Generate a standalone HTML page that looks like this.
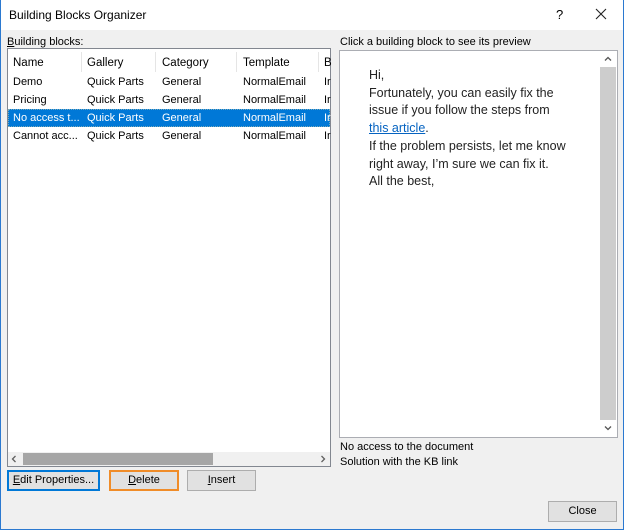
<!DOCTYPE html>
<html><head><style>
*{margin:0;padding:0;box-sizing:border-box}
body{width:624px;height:530px;overflow:hidden;background:#f0f0f0;font-family:"Liberation Sans",sans-serif;font-size:11px;color:#000;position:relative}
.a{position:absolute;white-space:nowrap}
#frame{position:absolute;left:0;top:0;width:624px;height:530px;border:1px solid #2b79d0;border-top:none;pointer-events:none}
.btn{position:absolute;height:21px;background:#e1e1e1;border:1px solid #adadad;text-align:center;line-height:19px;font-size:11px}
.row{position:absolute;left:1px;width:322px;height:18px;line-height:18px}
.row span,.hd span{position:absolute;top:0}
.pv{font-family:"Liberation Sans",sans-serif;font-size:12.5px;line-height:17.7px;color:#222}
</style></head><body>
<div class="a" style="left:0;top:0;width:624px;height:30px;background:#fff"></div>
<div class="a" style="left:9px;top:8px;font-size:12px">Building Blocks Organizer</div>
<div class="a" style="left:556px;top:7px;font-size:13px">?</div>
<svg class="a" style="left:595px;top:8px" width="12" height="12"><path d="M1 1L11 11M11 1L1 11" stroke="#222" stroke-width="1.1"/></svg>

<div class="a" style="left:7px;top:36px"><u>B</u>uilding blocks:</div>
<div class="a" style="left:7px;top:48px;width:324px;height:419px;background:#fff;border:1px solid #828790"></div>
<div class="a hd" style="left:8px;top:53px;width:322px;height:20px;line-height:20px;font-size:11.5px">
<span style="left:5px">Name</span><span style="left:79px">Gallery</span><span style="left:154px">Category</span><span style="left:235px">Template</span><span style="left:316px">B</span>
</div>
<div class="a" style="left:81px;top:52px;width:1px;height:20px;background:#e5e5e5"></div>
<div class="a" style="left:155px;top:52px;width:1px;height:20px;background:#e5e5e5"></div>
<div class="a" style="left:236px;top:52px;width:1px;height:20px;background:#e5e5e5"></div>
<div class="a" style="left:318px;top:52px;width:1px;height:20px;background:#e5e5e5"></div>
<div class="a" style="left:7px;top:73px;width:324px">
<div class="row" style="top:0"><span style="left:5px">Demo</span><span style="left:79px">Quick Parts</span><span style="left:154px">General</span><span style="left:235px">NormalEmail</span><span style="left:316px">Ir</span></div>
<div class="row" style="top:18px"><span style="left:5px">Pricing</span><span style="left:79px">Quick Parts</span><span style="left:154px">General</span><span style="left:235px">NormalEmail</span><span style="left:316px">Ir</span></div>
<div class="row" style="top:36px;background:#0078d7;color:#fff;outline:1px dotted #7ab;outline-offset:-1px"><span style="left:5px">No access t...</span><span style="left:79px">Quick Parts</span><span style="left:154px">General</span><span style="left:235px">NormalEmail</span><span style="left:316px">Ir</span></div>
<div class="row" style="top:54px"><span style="left:5px">Cannot acc...</span><span style="left:79px">Quick Parts</span><span style="left:154px">General</span><span style="left:235px">NormalEmail</span><span style="left:316px">Ir</span></div>
</div>
<div class="a" style="left:8px;top:452px;width:322px;height:14px;background:#f0f0f0"></div>
<div class="a" style="left:23px;top:453px;width:190px;height:12px;background:#a6a6a6"></div>
<svg class="a" style="left:11px;top:455px" width="6" height="8"><path d="M4.5 1L1.5 4L4.5 7" stroke="#606060" stroke-width="1.3" fill="none"/></svg>
<svg class="a" style="left:320px;top:455px" width="6" height="8"><path d="M1.5 1L4.5 4L1.5 7" stroke="#606060" stroke-width="1.3" fill="none"/></svg>

<div class="btn" style="left:7px;top:470px;width:93px;border:2px solid #0078d7;line-height:17px"><u>E</u>dit Properties...</div>
<div class="btn" style="left:109px;top:470px;width:70px;border:2px solid #f08c28;line-height:17px"><u>D</u>elete</div>
<div class="btn" style="left:187px;top:470px;width:69px"><u>I</u>nsert</div>

<div class="a" style="left:340px;top:36px">Click a building block to see its preview</div>
<div class="a" style="left:339px;top:50px;width:279px;height:388px;background:#fff;border:1px solid #abadb3"></div>
<div class="a" style="left:600px;top:67px;width:16px;height:353px;background:#cdcdcd"></div>
<svg class="a" style="left:604px;top:56px" width="8" height="6"><path d="M1 4.5L4 1.5L7 4.5" stroke="#555" stroke-width="1.3" fill="none"/></svg>
<svg class="a" style="left:604px;top:425px" width="8" height="6"><path d="M1 1.5L4 4.5L7 1.5" stroke="#555" stroke-width="1.3" fill="none"/></svg>
<div class="a pv" style="left:369px;top:67px">
Hi,<br>Fortunately, you can easily fix the<br>issue if you follow the steps from<br><span style="color:#0563c1;text-decoration:underline">this article</span>.<br>If the problem persists, let me know<br>right away, I’m sure we can fix it.<br>All the best,
</div>
<div class="a" style="left:340px;top:441px">No access to the document</div>
<div class="a" style="left:340px;top:456px">Solution with the KB link</div>
<div class="btn" style="left:548px;top:501px;width:69px">Close</div>
<div id="frame"></div>
</body></html>
